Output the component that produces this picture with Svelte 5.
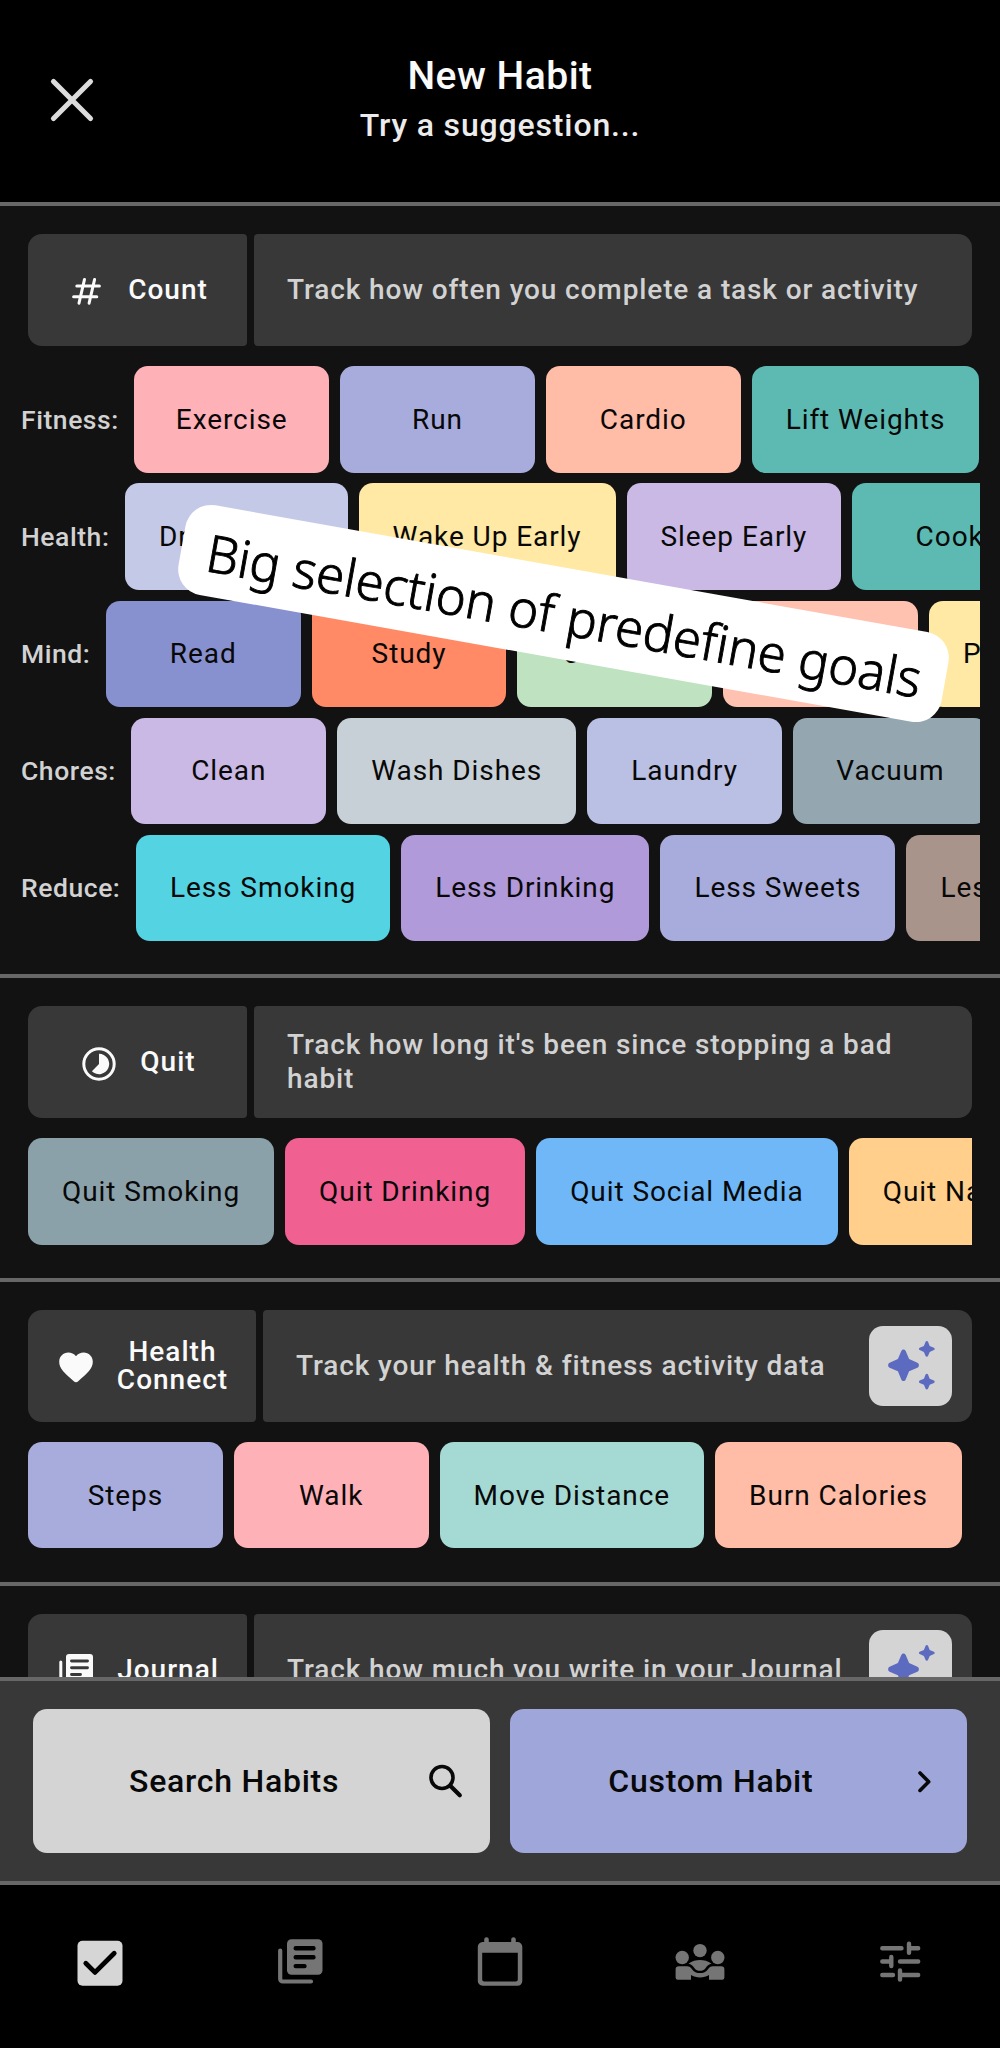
<script>
  const countRows = [
    { label: 'Fitness:', chips: [['Exercise', '#ffb1b8'], ['Run', '#a7acdc'], ['Cardio', '#ffbca6'], ['Lift Weights', '#5dbab3']] },
    { label: 'Health:', chips: [['Drink Water', '#c5c9e8'], ['Wake Up Early', '#ffe9a4'], ['Sleep Early', '#c9b9e4'], ['Cook', '#5dbab3']] },
    { label: 'Mind:', chips: [['Read', '#8891d0'], ['Study', '#ff8a65'], ['Journal', '#bfe3c1'], ['Meditate', '#ffc1b0'], ['Practice Music', '#ffe9a4']] },
    { label: 'Chores:', chips: [['Clean', '#c9b9e4'], ['Wash Dishes', '#c8d0d7'], ['Laundry', '#babfe4'], ['Vacuum', '#94a7b0']] },
    { label: 'Reduce:', chips: [['Less Smoking', '#54d3e3'], ['Less Drinking', '#b19ada'], ['Less Sweets', '#a7acdc'], ['Less Caffeine', '#a9948b']] }
  ];
  const sections = [
    {
      id: 'quit', title: 'Quit', text: "Track how long it's been since stopping a bad habit",
      chips: [['Quit Smoking', '#8ba1a9'], ['Quit Drinking', '#f06090'], ['Quit Social Media', '#6fb7f6'], ['Quit Nail Biting', '#ffcf8b']]
    },
    {
      id: 'health', title: 'Health Connect', text: 'Track your health & fitness activity data', premium: true,
      chips: [['Steps', '#a7acdc'], ['Walk', '#ffb1b8'], ['Move Distance', '#a5dad4'], ['Burn Calories', '#ffbca6']]
    },
    { id: 'journal', title: 'Journal', text: 'Track how much you write in your Journal', premium: true, chips: [] }
  ];
</script>

{#snippet chip(name, color)}
  <button class="chip" style:background={color}>{name}</button>
{/snippet}

{#snippet icon(id)}
  <svg class="icon" viewBox="0 0 40 40">
    {#if id === 'count'}
      <path d="M17.500 7.400 12 31.200M27.600 7.400 22.100 31.200M9.800 14.100H32.400M6.600 24.800H29.800" fill="none" stroke="#fafafa" stroke-width="3" stroke-linecap="round" />
    {:else if id === 'quit'}
      <circle cx="20" cy="20" r="15.2" fill="none" stroke="#fafafa" stroke-width="3" />
      <path d="M20 9.8A10.2 10.2 0 1 1 12.9 27.3L20 20Z" fill="#fafafa" />
    {:else if id === 'health'}
      <path transform="translate(0 -2.4)" d="M20 36.6c-.8 0-1.6-.3-2.2-.9C8.500 27.500 3.200 22.900 3.200 16.200 3.200 11 7.200 7 12.300 7c3 0 5.800 1.400 7.700 3.600C21.900 8.400 24.700 7 27.700 7c5.100 0 9.100 4 9.100 9.200 0 6.700-5.300 11.300-14.600 19.500-.6.6-1.400.9-2.200.9Z" fill="#fafafa" />
    {:else}
      <path d="M4.800 11v22.500a2 2 0 0 0 2 2H29" fill="none" stroke="#fafafa" stroke-width="3" stroke-linecap="round" />
      <rect x="10" y="3" width="27" height="26.500" rx="3" fill="#fafafa" />
      <path d="M15.500 10h16M15.500 16.800h16M15.500 23.500h9" stroke="#383838" stroke-width="2.900" stroke-linecap="round" />
    {/if}
  </svg>
{/snippet}

{#snippet intro(id, title, text, premium)}
  <div class="intro">
    <div class="kind" class:narrow={id === 'health'}>
      {@render icon(id)}
      <strong>{title}</strong>
    </div>
    <div class="about">
      <p>{text}</p>
      {#if premium}
        <button class="spark" aria-label="Premium">
          <svg viewBox="0 0 83 80">
            <path d="M34.500 23.500c1 0 1.800.6 2.200 1.500l3.400 8.100 8.300 3.600c2 .9 2 4.100 0 5l-8.300 3.600-3.400 8.100c-.9 2-3.500 2-4.400 0l-3.400-8.100-8.300-3.600c-2-.9-2-4.100 0-5l8.300-3.600 3.400-8.100c.4-.9 1.200-1.500 2.200-1.500Z" />
            <path d="M57.800 15c.6 0 1 .3 1.200.8l1.700 4.100 4.200 1.800c1 .5 1 1.900 0 2.400l-4.200 1.800-1.700 4.100c-.5 1.100-1.900 1.100-2.400 0l-1.700-4.100-4.200-1.800c-1-.5-1-1.900 0-2.400l4.200-1.800 1.700-4.100c.2-.5.600-.8 1.200-.8Z" />
            <path d="M57.800 47.800c.6 0 1 .3 1.200.8l1.700 4.100 4.200 1.800c1 .5 1 1.900 0 2.400l-4.200 1.800-1.700 4.100c-.5 1.100-1.900 1.100-2.400 0l-1.700-4.100-4.200-1.800c-1-.5-1-1.900 0-2.400l4.200-1.800 1.700-4.100c.2-.5.600-.8 1.200-.8Z" />
          </svg>
        </button>
      {/if}
    </div>
  </div>
{/snippet}

<div class="screen">
  <header>
    <button class="close" aria-label="Close">
      <svg viewBox="0 0 60 60"><path d="M11.500 11.500 48.500 48.500M48.500 11.500 11.500 48.500" fill="none" stroke="#dcdcdc" stroke-width="5.200" stroke-linecap="round" /></svg>
    </button>
    <div class="titles">
      <h1>New Habit</h1>
      <h2>Try a suggestion...</h2>
    </div>
  </header>

  <main>
    <section>
      {@render intro('count', 'Count', 'Track how often you complete a task or activity', false)}
      <div class="groups">
        {#each countRows as row}
          <div class="group">
            <span class="label">{row.label}</span>
            {#each row.chips as [name, color]}{@render chip(name, color)}{/each}
          </div>
        {/each}
      </div>
    </section>
    {#each sections as s}
      <section>
        {@render intro(s.id, s.title, s.text, s.premium)}
        <div class="strip">
          {#each s.chips as [name, color]}{@render chip(name, color)}{/each}
        </div>
      </section>
    {/each}
  </main>

  <div class="actions">
    <button class="search">
      <span>Search Habits</span>
      <svg viewBox="0 0 40 40"><circle cx="16" cy="16.500" r="11" fill="none" stroke="#080808" stroke-width="3.600" /><path d="m24.500 25 9.300 9.300" stroke="#080808" stroke-width="4.200" stroke-linecap="round" /></svg>
    </button>
    <button class="custom">
      <span>Custom Habit</span>
      <svg viewBox="0 0 40 40"><path d="m17 12 8.700 8.700-8.700 8.700" fill="none" stroke="#080808" stroke-width="3.600" stroke-linecap="round" stroke-linejoin="round" /></svg>
    </button>
  </div>

  <nav>
    <a href="#habits" aria-label="Habits">
      <svg viewBox="0 0 60 60"><rect x="7.500" y="7.700" width="45" height="45" rx="5" fill="#d6d6d6" /><path d="m15.800 30.200 9.200 9.200 19.200-19.200" fill="none" stroke="#000" stroke-width="4.800" stroke-linecap="round" stroke-linejoin="round" /></svg>
    </a>
    <a href="#journal" aria-label="Journal">
      <svg viewBox="0 0 60 60"><path d="M10.200 17.500V46a2.500 2.500 0 0 0 2.500 2.500H41" fill="none" stroke="#757575" stroke-width="4.200" stroke-linecap="round" /><rect x="17" y="6.300" width="35.500" height="35.500" rx="4.500" fill="#757575" /><path d="M25.700 15.300H43.500M25.700 24.200H43.500M25.700 33.100H34.500" stroke="#000" stroke-width="4.400" stroke-linecap="round" /></svg>
    </a>
    <a href="#calendar" aria-label="Calendar">
      <svg viewBox="0 0 60 60"><path fill-rule="evenodd" d="M12.500 9h1.700V6.500a2.200 2.200 0 0 1 4.600 0V9h22.400V6.500a2.200 2.200 0 0 1 4.600 0V9h1.700a4.800 4.800 0 0 1 4.800 4.800V48a4.800 4.800 0 0 1-4.800 4.800h-35A4.800 4.800 0 0 1 7.800 48V13.800A4.800 4.800 0 0 1 12.500 9ZM12.200 19.800V46.500a2 2 0 0 0 2 2H45.800a2 2 0 0 0 2-2V19.800Z" fill="#757575" /></svg>
    </a>
    <a href="#community" aria-label="Community">
      <svg viewBox="0 0 60 60" fill="#757575"><circle cx="30" cy="17.600" r="6.700" /><circle cx="12.200" cy="24.500" r="6.700" /><circle cx="47.800" cy="24.500" r="6.700" /><path d="M18.500 30.800C22 28 26 27 30 27s8 1 11.500 3.800c-2.700.5-4.300 2.200-6 4.400C34 37 32.300 37.800 30 37.800s-4-.8-5.500-2.600c-1.700-2.200-3.300-3.900-6-4.400Z" /><path d="M5.600 44.500v-8a3.300 3.300 0 0 1 3.300-3.300H17c2.400 0 3.700 1.200 5 3 1.900 2.600 4.600 3.900 8 3.900s6.100-1.300 8-3.900c1.300-1.800 2.600-3 5-3h8.100a3.300 3.300 0 0 1 3.300 3.300v8a2.200 2.200 0 0 1-2.200 2.200H39v-4.600c-2.500 1.500-5.500 2.300-9 2.300s-6.500-.8-9-2.300v4.600H7.800a2.200 2.200 0 0 1-2.200-2.200Z" /></svg>
    </a>
    <a href="#settings" aria-label="Settings">
      <svg viewBox="0 0 60 60"><path d="M12.300 15.300H31.500M39 10.800v9M39 15.300h9.200M12.300 28.500h9M21.300 24v9M30 28.500H48.200M12.300 42H23M30 37.500v9M30 42H48.200" fill="none" stroke="#757575" stroke-width="4.400" stroke-linecap="round" /></svg>
    </a>
  </nav>

  <div class="banner">
    <svg viewBox="0 0 775 91"><text x="26" y="66.500" textLength="725" lengthAdjust="spacingAndGlyphs">Big selection of predefine goals</text></svg>
  </div>
</div>

<style>
  :global(body) { background: #000; }
  .screen {
    position: relative;
    display: flex;
    flex-direction: column;
    width: 1000px;
    height: 2048px;
    overflow: hidden;
    background: #000;
    color: #fafafa;
    font-family: Roboto, "Liberation Sans", sans-serif;
    box-sizing: border-box;
  }
  .screen * { box-sizing: border-box; }
  button { margin: 0; padding: 0; border: 0; font: inherit; color: inherit; background: none; }
  svg { display: block; }
  h1, h2, p { margin: 0; }

  header {
    flex: none;
    display: grid;
    grid-template-columns: 60px 1fr 60px;
    align-items: center;
    height: 206.400px;
    padding: 0 42px;
    border-bottom: 4px solid #676767;
  }
  .close { width: 60px; height: 60px; margin-top: -3px; }
  .close svg { width: 60px; height: 60px; }
  .titles { margin-top: -3px; text-align: center; }
  h1 { font-size: 39px; line-height: 50px; font-weight: 500; letter-spacing: 0.500px; }
  h2 { font-size: 32px; line-height: 48px; font-weight: 500; letter-spacing: 0.850px; color: #ececec; }

  main { height: 1470.600px; flex: none; overflow: hidden; background: #121212; }
  section { padding: 28px 0 33.400px; border-bottom: 4px solid #676767; }

  .intro { display: flex; gap: 7px; height: 112px; margin: 0 28px 20px; }
  .kind {
    flex: none;
    display: flex;
    align-items: center;
    justify-content: center;
    gap: 21px;
    min-width: 219px;
    padding: 0 28px;
    border-radius: 14px 4px 4px 14px;
    background: #383838;
  }
  .kind .icon { width: 40px; height: 40px; margin-top: 3px; flex: none; }
  .kind strong { font-size: 28px; line-height: 28.500px; font-weight: 500; letter-spacing: 1px; text-align: center; }
  .kind.narrow { width: 228px; }
  .about {
    flex: 1;
    display: flex;
    align-items: center;
    justify-content: space-between;
    padding: 0 20px 0 33px;
    border-radius: 4px 14px 14px 4px;
    background: #383838;
  }
  .about p { font-size: 28px; line-height: 34px; font-weight: 500; letter-spacing: 0.880px; color: #d2d2d2; }
  .spark { flex: none; width: 83px; height: 80px; border-radius: 14px; background: #d4d4d4; }
  .spark svg { width: 83px; height: 80px; fill: #5c6bc0; }

  .groups { display: flex; flex-direction: column; gap: 10.800px; margin: 0 20px; }
  .group { display: flex; align-items: center; gap: 11px; overflow: hidden; }
  .label { flex: none; margin: -1px 4.500px 0 0; padding-left: 1px; font-size: 26.500px; font-weight: 500; letter-spacing: 0.550px; color: #d2d2d2; }
  .strip { display: flex; gap: 11px; height: 106.300px; margin: 0 28px; overflow: hidden; }
  .chip {
    flex: none;
    min-width: 194.800px;
    height: 106.300px;
    padding: 0 34px;
    border-radius: 14px;
    font-size: 28px;
    letter-spacing: 0.930px;
    white-space: nowrap;
    color: #080808;
  }

  .actions {
    flex: none;
    display: flex;
    gap: 20px;
    height: 208px;
    padding: 28px 33.300px;
    border-top: 4px solid #676767;
    border-bottom: 4px solid #676767;
    background: #383838;
  }
  .actions button {
    flex: 1;
    display: flex;
    align-items: center;
    padding: 0 24px 0 9px;
    border-radius: 14px;
    color: #080808;
    font-size: 32px;
    font-weight: 500;
    letter-spacing: 0.750px;
  }
  .actions span { flex: 1; text-align: center; }
  .actions svg { width: 40px; height: 40px; flex: none; }
  .search { background: #d4d4d4; }
  .custom { background: #9fa7da; }

  nav { flex: 1; display: grid; grid-template-columns: repeat(5, 1fr); place-items: center; padding-bottom: 7px; }
  nav svg { width: 60px; height: 60px; }

  .banner {
    position: absolute;
    left: 176.300px;
    top: 568.200px;
    width: 775px;
    height: 91px;
    border-radius: 26px;
    background: #fff;
    transform: rotate(10.1deg);
  }
  .banner text { font-family: "Noto Sans", "Open Sans", sans-serif; font-size: 51.500px; font-weight: 300; fill: #000; stroke: #000; stroke-width: 0.900px; }
</style>
